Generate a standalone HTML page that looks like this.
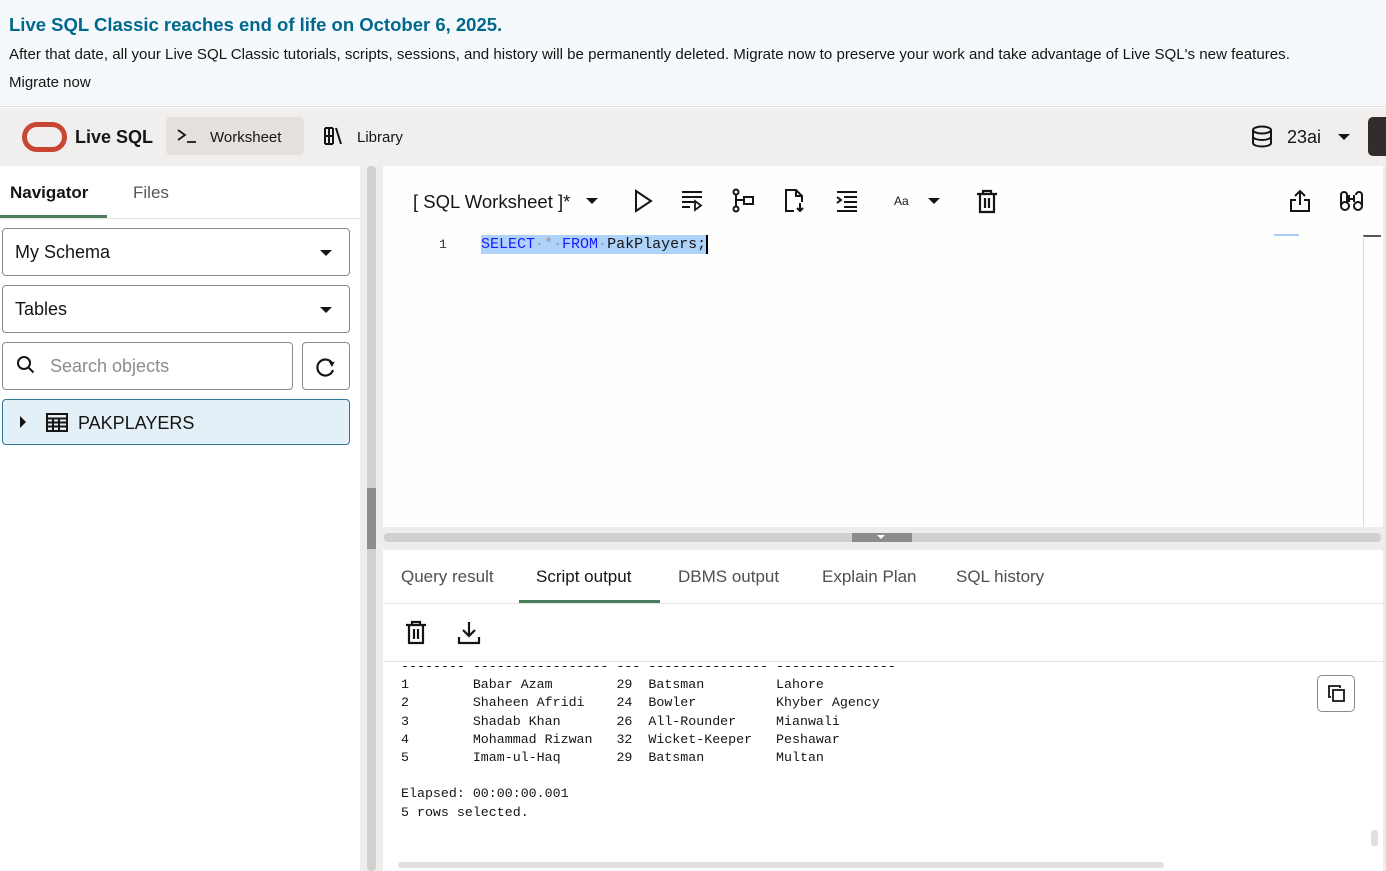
<!DOCTYPE html>
<html><head><meta charset="utf-8"><style>
*{margin:0;padding:0;box-sizing:border-box}
body{width:1386px;height:871px;overflow:hidden;position:relative;font-family:"Liberation Sans",sans-serif;color:#161513;background:#fff}
.a{position:absolute}
.mono{font-family:"Liberation Mono",monospace;font-size:13.3px;white-space:pre;line-height:18.2px}
.sel{border:1px solid #8a8a8a;border-radius:4px;background:#fff}
.tri{width:0;height:0;border-left:6px solid transparent;border-right:6px solid transparent;border-top:6px solid #161513}
.tab{font-size:17px;color:#4f4f4f}
svg{position:absolute}
</style></head><body>
<div class="a" style="left:0;top:0;width:1386px;height:107px;background:#f5f9fc;border-bottom:1px solid #e4e4e4"></div>
<div class="a" style="left:9px;top:14px;font-size:18.5px;font-weight:bold;color:#00688c">Live SQL Classic reaches end of life on October 6, 2025.</div>
<div class="a" style="left:9px;top:46px;font-size:15.1px">After that date, all your Live SQL Classic tutorials, scripts, sessions, and history will be permanently deleted. Migrate now to preserve your work and take advantage of Live SQL's new features.</div>
<div class="a" style="left:9px;top:74px;font-size:15px">Migrate now</div>
<div class="a" style="left:0;top:108px;width:1386px;height:58px;background:#f1efed"></div>
<div class="a" style="left:22px;top:122px;width:45px;height:30px;border:5px solid #c74634;border-radius:15px"></div>
<div class="a" style="left:75px;top:127px;font-size:18px;font-weight:bold">Live SQL</div>
<div class="a" style="left:166px;top:117px;width:138px;height:38px;background:#e4e1dd;border-radius:4px"></div>
<svg style="left:176px;top:127px" width="22" height="18"><path d="M2 3l7 5-7 5M11 15h9" stroke="#161513" stroke-width="1.8" fill="none"/></svg>
<div class="a" style="left:210px;top:129px;font-size:15px">Worksheet</div>
<svg style="left:323px;top:126px" width="22" height="20"><path d="M2 2v16M6 2v16M10 2v16M2 2h8M2 18h8M2 10h8M13 2l5 16" stroke="#161513" stroke-width="2" fill="none"/></svg>
<div class="a" style="left:357px;top:129px;font-size:15px">Library</div>
<svg style="left:1251px;top:125px" width="24" height="24"><ellipse cx="11" cy="5" rx="9" ry="3.5" stroke="#161513" stroke-width="2" fill="none"/><path d="M2 5v13c0 2 4 3.5 9 3.5s9-1.5 9-3.5V5M2 11.5c0 2 4 3.5 9 3.5s9-1.5 9-3.5" stroke="#161513" stroke-width="2" fill="none"/></svg>
<div class="a" style="left:1287px;top:127px;font-size:18px">23ai</div>
<div class="a tri" style="left:1338px;top:134px"></div>
<div class="a" style="left:1368px;top:117px;width:20px;height:39px;background:#312d2a;border-radius:5px 0 0 5px"></div>
<div class="a" style="left:0;top:166px;width:360px;height:705px;background:#fff"></div>
<div class="a" style="left:0;top:218px;width:360px;height:1px;background:#e4e4e4"></div>
<div class="a" style="left:10px;top:183px;font-size:17px;font-weight:bold">Navigator</div>
<div class="a" style="left:0;top:215px;width:107px;height:3px;background:#4b7d5c"></div>
<div class="a" style="left:133px;top:183px;font-size:17px;color:#5b5652">Files</div>
<div class="a sel" style="left:2px;top:228px;width:348px;height:48px"></div>
<div class="a" style="left:15px;top:242px;font-size:18px">My Schema</div>
<div class="a tri" style="left:320px;top:250px"></div>
<div class="a sel" style="left:2px;top:285px;width:348px;height:48px"></div>
<div class="a" style="left:15px;top:299px;font-size:18px">Tables</div>
<div class="a tri" style="left:320px;top:307px"></div>
<div class="a sel" style="left:2px;top:342px;width:291px;height:48px"></div>
<svg style="left:16px;top:355px" width="22" height="22"><circle cx="8" cy="8" r="6" stroke="#161513" stroke-width="2" fill="none"/><path d="M12.5 12.5l5 5" stroke="#161513" stroke-width="2"/></svg>
<div class="a" style="left:50px;top:356px;font-size:18px;color:#8f8b88">Search objects</div>
<div class="a sel" style="left:302px;top:342px;width:48px;height:48px"></div>
<svg style="left:314px;top:355px" width="24" height="24"><path d="M18 8A8 8 0 1 0 19 15" stroke="#161513" stroke-width="2.2" fill="none"/><path d="M15 7h6v-1l-3 6z" fill="#161513"/></svg>
<div class="a" style="left:2px;top:399px;width:348px;height:46px;background:#e3f0f7;border:1px solid #2f7a99;border-radius:4px"></div>
<div class="a" style="left:20px;top:416px;width:0;height:0;border-top:6px solid transparent;border-bottom:6px solid transparent;border-left:6px solid #161513"></div>
<svg style="left:46px;top:413px" width="22" height="19"><rect x="1" y="1" width="20" height="17" fill="none" stroke="#161513" stroke-width="2"/><path d="M1 5.5h20M1 9.5h20M1 13.5h20M7 5v13M13 5v13" stroke="#161513" stroke-width="2"/></svg>
<div class="a" style="left:78px;top:413px;font-size:18px">PAKPLAYERS</div>
<div class="a" style="left:360px;top:166px;width:23px;height:705px;background:#efedeb"></div>
<div class="a" style="left:367px;top:166px;width:9px;height:705px;background:#d2d0ce;border-radius:4px"></div>
<div class="a" style="left:367px;top:488px;width:9px;height:61px;background:#8f8d8b"></div>
<div class="a" style="left:383px;top:166px;width:1003px;height:362px;background:#fefefd"></div>
<div class="a" style="left:413px;top:191px;font-size:18.5px">[ SQL Worksheet ]*</div>
<div class="a tri" style="left:586px;top:198px"></div>
<svg style="left:632px;top:189px" width="24" height="24"><path d="M4 2l15 10-15 10z" stroke="#161513" stroke-width="2" fill="none"/></svg>
<svg style="left:680px;top:189px" width="26" height="24"><path d="M2 3h20M2 8h20M2 13h12M2 18h8" stroke="#161513" stroke-width="2"/><path d="M15 12v9l6-4.5z" stroke="#161513" stroke-width="1.8" fill="none"/></svg>
<svg style="left:731px;top:188px" width="26" height="26"><circle cx="5" cy="4" r="2.5" stroke="#161513" stroke-width="2" fill="none"/><circle cx="5" cy="21" r="2.5" stroke="#161513" stroke-width="2" fill="none"/><path d="M5 7v12M5 12h8" stroke="#161513" stroke-width="2"/><rect x="13" y="9" width="9" height="7" stroke="#161513" stroke-width="2" fill="none"/></svg>
<svg style="left:783px;top:188px" width="26" height="26"><path d="M11 23H3V2h10l6 6v6M13 2v6h6" stroke="#161513" stroke-width="2" fill="none"/><path d="M17 15v8M14 20l3 3 3-3" stroke="#161513" stroke-width="2" fill="none"/></svg>
<svg style="left:835px;top:190px" width="24" height="22"><path d="M2 2h20M9 7h13M9 12h13M9 17h13M2 21h20M2 7l4 3-4 3" stroke="#161513" stroke-width="2" fill="none"/></svg>
<div class="a" style="left:894px;top:194px;font-size:12px">Aa</div>
<div class="a tri" style="left:928px;top:198px"></div>
<svg style="left:975px;top:189px" width="24" height="25"><path d="M2 5h20M8 5V2h8v3M5 5v18h14V5M10 9v10M14 9v10" stroke="#161513" stroke-width="2.2" fill="none"/></svg>
<svg style="left:1288px;top:188px" width="24" height="26"><path d="M8 12H3v11h18V12h-5M12 17V3M7 8l5-5 5 5" stroke="#161513" stroke-width="2" fill="none"/></svg>
<svg style="left:1339px;top:189px" width="26" height="24"><circle cx="6" cy="17" r="4" stroke="#161513" stroke-width="2" fill="none"/><circle cx="19" cy="17" r="4" stroke="#161513" stroke-width="2" fill="none"/><path d="M2 17V6a3 3 0 0 1 6 0v7M17 6a3 3 0 0 1 6 0v11M10 13V6M15 13V6M10 10h5" stroke="#161513" stroke-width="2" fill="none"/></svg>
<div class="a" style="left:1274px;top:234px;width:25px;height:2px;background:#a8cdf5"></div>
<div class="a" style="left:1363px;top:235px;width:18px;height:2px;background:#555"></div>
<div class="a" style="left:1363px;top:236px;width:1px;height:292px;background:#ddd"></div>
<div class="a" style="left:439px;top:237px;font-size:13px;color:#333;font-family:'Liberation Mono',monospace">1</div>
<div class="a" style="left:481px;top:235px;width:225px;height:19px;background:#add3fb"></div>
<div class="a mono" style="left:481px;top:236px;font-size:15px;letter-spacing:0"><span style="color:#1a1aff">SELECT</span><span style="color:#999">·*·</span><span style="color:#1a1aff">FROM</span><span style="color:#999">·</span>PakPlayers;</div>
<div class="a" style="left:706px;top:235px;width:2px;height:19px;background:#000"></div>
<div class="a" style="left:383px;top:527px;width:1003px;height:23px;background:#efedeb"></div>
<div class="a" style="left:384px;top:533px;width:997px;height:9px;background:#d2d0ce;border-radius:4px"></div>
<div class="a" style="left:852px;top:533px;width:60px;height:9px;background:#8f8d8b"></div>
<div class="a" style="left:877px;top:535px;width:0;height:0;border-left:4px solid transparent;border-right:4px solid transparent;border-top:4px solid #fff"></div>
<div class="a" style="left:383px;top:550px;width:1003px;height:321px;background:#fff"></div>
<div class="a tab" style="left:401px;top:567px">Query result</div>
<div class="a tab" style="left:536px;top:567px;color:#161513">Script output</div>
<div class="a" style="left:519px;top:600px;width:141px;height:3px;background:#4b7d5c"></div>
<div class="a tab" style="left:678px;top:567px">DBMS output</div>
<div class="a tab" style="left:822px;top:567px">Explain Plan</div>
<div class="a tab" style="left:956px;top:567px">SQL history</div>
<div class="a" style="left:383px;top:603px;width:1003px;height:1px;background:#e4e4e4"></div>
<svg style="left:404px;top:620px" width="24" height="25"><path d="M2 5h20M8 5V2h8v3M5 5v18h14V5M10 9v10M14 9v10" stroke="#161513" stroke-width="2.2" fill="none"/></svg>
<svg style="left:456px;top:620px" width="26" height="25"><path d="M13 2v14M7 10l6 6 6-6M3 17v6h20v-6" stroke="#161513" stroke-width="2.2" fill="none"/></svg>
<div class="a" style="left:383px;top:661px;width:1003px;height:1px;background:#e4e4e4"></div>
<div class="a mono" style="left:401px;top:658px;line-height:18.2px">-------- ----------------- --- --------------- ---------------
1        Babar Azam        29  Batsman         Lahore
2        Shaheen Afridi    24  Bowler          Khyber Agency
3        Shadab Khan       26  All-Rounder     Mianwali
4        Mohammad Rizwan   32  Wicket-Keeper   Peshawar
5        Imam-ul-Haq       29  Batsman         Multan

Elapsed: 00:00:00.001
5 rows selected.</div>
<div class="a" style="left:1317px;top:675px;width:38px;height:37px;border:1px solid #8a8a8a;border-radius:5px;background:#fff"></div>
<svg style="left:1327px;top:684px" width="20" height="20"><path d="M4 13H2V2h11v2" stroke="#161513" stroke-width="1.8" fill="none"/><rect x="6" y="6" width="11" height="11" stroke="#161513" stroke-width="1.8" fill="none"/></svg>
<div class="a" style="left:1371px;top:830px;width:7px;height:16px;background:#e0e0e0;border-radius:3px"></div>
<div class="a" style="left:398px;top:862px;width:766px;height:6px;background:#e0e0e0;border-radius:3px"></div>
<div class="a" style="left:1383px;top:166px;width:3px;height:705px;background:#efedeb"></div>
</body></html>
